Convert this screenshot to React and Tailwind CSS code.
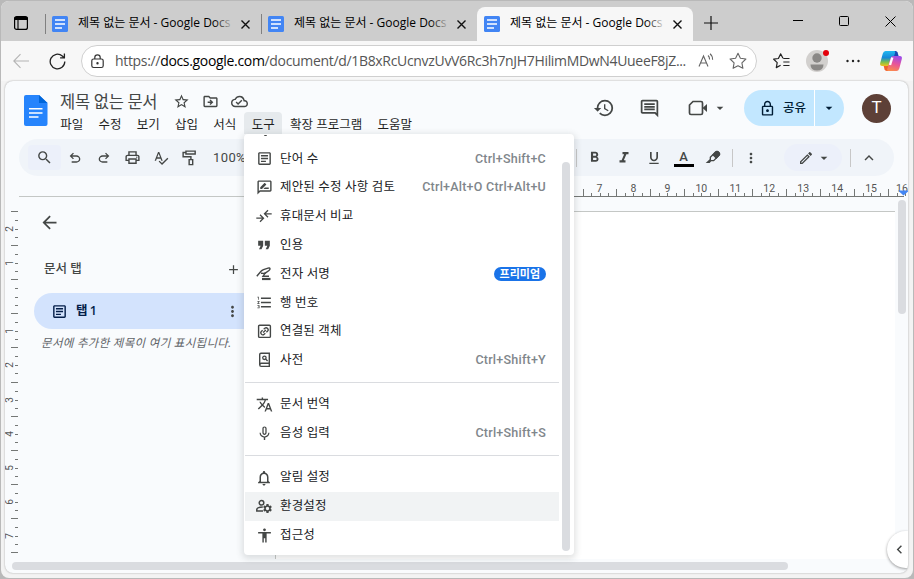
import {
  MdAccessibility,
  MdAdd,
  MdArrowBack,
  MdArrowDropDown,
  MdFormatBold,
  MdFormatItalic,
  MdFormatListNumbered,
  MdFormatQuote,
  MdFormatUnderlined,
  MdHistory,
  MdKeyboardArrowLeft,
  MdKeyboardArrowUp,
  MdMicNone,
  MdMoreVert,
  MdNotificationsNone,
  MdOutlineArticle,
  MdOutlineCloudDone,
  MdOutlineComment,
  MdOutlineDriveFileMove,
  MdOutlineEdit,
  MdOutlineLock,
  MdOutlinePrint,
  MdOutlineRateReview,
  MdSearch,
  MdSettings,
  MdSpellcheck,
  MdStarOutline,
  MdTranslate,
} from "react-icons/md";

const DocsFavicon = () => (
  <svg className="w-4 h-4 shrink-0" viewBox="0 0 16 16">
    <rect width="16" height="16" rx="1.5" fill="#4285f4" />
    <path d="M3 4h10M3 8h10M3 12h7" stroke="#fff" strokeWidth="1.7" />
  </svg>
);

const UndoIcon = ({ className }) => (
  <svg className={className} viewBox="0 -960 960 960" fill="currentColor">
    <path d="M280-200v-80h284q63 0 109.5-40T720-420q0-60-46.5-100T564-560H312l104 104-56 56-200-200 200-200 56 56-104 104h252q97 0 166.5 63T800-420q0 94-69.5 157T564-200H280Z" />
  </svg>
);

const PaintRollerIcon = () => (
  <svg className="w-[17px] h-[17px]" viewBox="0 0 24 24" fill="none" stroke="currentColor" strokeWidth="2">
    <path d="M7 3h13v4H7zM7 5H3v6h11v4M11.5 15h5v7h-5z" />
  </svg>
);

const HighlighterIcon = () => (
  <svg className="w-[16px] h-[16px]" viewBox="0 0 24 24" fill="none" stroke="currentColor" strokeWidth="2">
    <path d="M8 11l8-8q2-1.500 4 0l1 1q1.500 2 0 4l-8 8H9l-1-1z" />
    <path d="M12 7l5 5 4-4q2-2 0-4l-1-1q-2-2-4 0z" fill="currentColor" />
    <path d="M7 14l-6 5.500h6l2.500-3z" fill="currentColor" stroke="none" />
  </svg>
);

const CompareIcon = () => (
  <svg className="w-4 h-4" viewBox="0 0 16 16" fill="none" stroke="currentColor" strokeWidth="1.3">
    <path d="M.3 10.200h7M4 6.700l3.500 3.500L4 13.700M15.700 5.800H8.700M12 2.300L8.500 5.800 12 9.300" />
  </svg>
);

const SignatureIcon = () => (
  <svg className="w-4 h-4" viewBox="0 0 16 16" fill="none" stroke="currentColor" strokeWidth="1.4">
    <path d="M.8 10.200L5 5.300q1-1 2.500-1.600L12 2.100q1.800-.5 2 .6.2 1-1 1.800L9.600 6.900q-.8.6-2.200.5L5 7.200" />
    <path d="M9.500 6.700L7 10.200h6" />
    <path d="M6 13h8.500" strokeWidth="2.200" />
  </svg>
);

const LinkedObjectIcon = () => (
  <svg className="w-[15px] h-[15px]" viewBox="0 0 15 15" fill="none" stroke="currentColor" strokeWidth="1.4">
    <rect x="1.6" y="1.2" width="11.8" height="12.2" rx="1" />
    <g transform="rotate(-42 7.5 7.3)" strokeWidth="1.3">
      <path d="M6.800 5.300H5.300a2 2 0 0 0 0 4h1.500M8.200 5.300h1.500a2 2 0 0 1 0 4H8.200M5.600 7.300h3.800" />
    </g>
  </svg>
);

const DictionaryIcon = () => (
  <svg className="w-[15px] h-4" viewBox="0 0 15 16" fill="none" stroke="currentColor" strokeWidth="1.4">
    <path d="M12.300 11.500V1.300H4Q2.700 1.300 2.700 2.600v10.200q0 1.600 1.500 1.600h8.800M2.900 12.700q.2-1.400 1.500-1.400h8.400M12.300 11.300v3" />
    <circle cx="7.400" cy="5.800" r="1.700" strokeWidth="1.3" />
    <path d="M8.600 7l2 2" strokeWidth="1.3" />
  </svg>
);

const ManageAccountsIcon = () => (
  <div className="relative w-[18px] h-[18px]">
    <svg className="w-[18px] h-[18px]" viewBox="0 0 18 18" fill="none" stroke="currentColor" strokeWidth="1.5">
      <circle cx="6.500" cy="5.800" r="2.300" />
      <path d="M8 14H1.800v-1.500q0-2.300 6-2.500" />
    </svg>
    <MdSettings className="absolute left-[7px] top-[6px] w-[11px] h-[11px]" />
  </div>
);

const tabs = [
  { title: "제목 없는 문서 - Google Docs", active: false },
  { title: "제목 없는 문서 - Google Docs", active: false },
  { title: "제목 없는 문서 - Google Docs", active: true },
];

const BrowserTab = ({ title, active }) => (
  <div
    className={
      active
        ? "relative flex items-center w-[216px] h-[34px] mt-[6px] pl-[7px] pr-[10px] rounded-t-lg bg-[#f7f7f7]"
        : "relative flex items-center w-[216px] h-[34px] mt-[6px] pl-[7px] pr-[10px]"
    }
  >
    {!active && <div className="absolute left-0 top-[7px] w-px h-5 bg-[#808080]" />}
    <DocsFavicon />
    <div className="relative -mt-[2px] ml-[10px] w-[156px] h-5 overflow-hidden whitespace-nowrap text-[12px] leading-5 text-black">
      {title}
      <div
        className={
          active
            ? "absolute right-0 top-0 w-5 h-5 bg-linear-to-r from-transparent to-[#f7f7f7]"
            : "absolute right-0 top-0 w-5 h-5 bg-linear-to-r from-transparent to-[#cdcdcd]"
        }
      />
    </div>
    <svg className="ml-[6px] w-[11px] h-[11px] shrink-0" viewBox="0 0 11 11" stroke="#111" strokeWidth="1.4">
      <path d="M1.5 1.5l8 8M9.5 1.5l-8 8" />
    </svg>
  </div>
);

const TabStrip = () => (
  <div className="flex h-10 bg-[#cdcdcd]">
    <div className="flex items-center w-11 pl-[13px] pt-[4px]">
      <svg className="w-[14px] h-[14px]" viewBox="0 0 14 14" fill="none" stroke="#000">
        <rect x=".6" y=".6" width="12.8" height="12.8" rx="2" strokeWidth="1.2" />
        <path d="M.5 2.4h13" strokeWidth="3" />
        <path d="M4 3v10.5" strokeWidth="1.1" />
      </svg>
    </div>
    {tabs.map((tab, i) => (
      <BrowserTab key={i} {...tab} />
    ))}
    <div className="flex items-center pt-[3px] pl-[11px]">
      <svg className="w-[14px] h-[14px]" viewBox="0 0 14 14" stroke="#111" strokeWidth="1.2">
        <path d="M7 0v14M0 7h14" />
      </svg>
    </div>
    <div className="flex ml-auto h-10">
      <div className="flex w-[46px] items-center justify-center">
        <svg className="w-[10px] h-[10px]" viewBox="0 0 10 10" stroke="#000">
          <path d="M0 4.5h10" />
        </svg>
      </div>
      <div className="flex w-[46px] items-center justify-center">
        <svg className="w-[10px] h-[10px]" viewBox="0 0 10 10" stroke="#000" fill="none">
          <rect x=".5" y=".5" width="9" height="9" rx="1" />
        </svg>
      </div>
      <div className="flex w-[46px] items-center justify-center">
        <svg className="w-[11px] h-[11px]" viewBox="0 0 11 11" stroke="#000">
          <path d="M.5.5l10 10M10.5.5l-10 10" />
        </svg>
      </div>
    </div>
  </div>
);

const CopilotLogo = () => (
  <svg className="w-6 h-6" viewBox="0 0 24 24">
    <defs>
      <linearGradient id="cpa" x1="0" y1="0" x2="0" y2="1">
        <stop offset="0" stopColor="#22b8f0" />
        <stop offset=".45" stopColor="#1689d8" />
        <stop offset=".75" stopColor="#7fc04c" />
        <stop offset="1" stopColor="#f2c21a" />
      </linearGradient>
      <linearGradient id="cpb" x1=".6" y1="0" x2=".3" y2="1">
        <stop offset="0" stopColor="#a04be8" />
        <stop offset=".5" stopColor="#e8559a" />
        <stop offset="1" stopColor="#fb8a4d" />
      </linearGradient>
    </defs>
    <path d="M13 2h3.600q1.500 0 2 1.600L19.600 7H15z" fill="#1946b5" />
    <path d="M6.500 2h8.600q1.500 0 1.100 1.600L12.600 15q-.7 2-2.600 2H3.200q-2.700 0-2-3L3.800 4.600Q4.500 2 6.500 2z" fill="url(#cpa)" />
    <path d="M11 22H7.800q-1.800 0-2.300-1.800L4.700 17H10z" fill="#f0622e" />
    <path d="M17.500 22H9.200q-1.500 0-1-1.700L11.500 9q.6-2 2.600-2h6.700q2.700 0 2 3l-2.500 9.400Q19.500 22 17.500 22z" fill="url(#cpb)" />
    <path d="M13.300 8.500l-2.300 7.500" stroke="#fff" strokeWidth="2.400" />
  </svg>
);

const AddressBar = () => (
  <div className="flex items-center h-10 bg-[#f7f7f7]">
    <svg className="ml-3 w-4 h-4 shrink-0" viewBox="0 0 16 16" fill="none" stroke="#b4b4b4" strokeWidth="1.1">
      <path d="M16 8H.8M7.500 1.200L.8 8l6.700 6.800" />
    </svg>
    <svg className="ml-5 w-[17px] h-[17px] shrink-0" viewBox="0 0 17 17" fill="none" stroke="#222" strokeWidth="1.3">
      <path d="M15.800 8.500a7.300 7.300 0 1 1-2.500-5.500l1.900 1.700M15.400.6v4.300h-4.300" />
    </svg>
    <div className="flex items-center ml-[15px] w-[676px] h-8 shrink-0 rounded-full border border-[#cfcfcf] bg-white">
      <svg className="ml-[9px] w-[13px] h-[15px]" viewBox="0 0 13 15" fill="none" stroke="#333" strokeWidth="1.2">
        <rect x=".8" y="5" width="11.400" height="8.500" rx="1.800" />
        <path d="M3.800 5V3.500a2.700 2.700 0 0 1 5.400 0V5" />
        <circle cx="6.500" cy="9.300" r=".6" fill="#333" />
      </svg>
      <div className="-mt-px ml-[11px] w-[576px] shrink-0 whitespace-nowrap text-[14px] text-[#555] tracking-[-0.325px]">
        https://<span className="text-black">docs.google.com</span>/document/d/1B8xRcUcnvzUvV6Rc3h7nJH7HilimMDwN4UueeF8jZ...
      </div>
      <svg className="ml-[7px] w-4 h-4 shrink-0" viewBox="0 0 16 16" fill="none" stroke="#666" strokeWidth="1.100">
        <path d="M1 13.500L5.500 3l4.500 10.500M2.500 10h6M10 2.500q1.600 1.300 1.600 4M12 .8q2.600 2 2.600 6" />
      </svg>
      <svg className="ml-[15px] w-[18px] h-[18px] shrink-0" viewBox="0 0 18 18" fill="none" stroke="#666" strokeWidth="1.100" strokeLinejoin="round">
        <path d="M9 1.200l2.400 5 5.500.8-4 3.800 1 5.500L9 13.700l-4.900 2.600 1-5.500-4-3.800 5.500-.8z" />
      </svg>
    </div>
    <svg className="ml-4 w-[17px] h-4" viewBox="0 0 17 16" fill="none" stroke="#222" strokeWidth="1.2" strokeLinejoin="round">
      <path d="M10 5.300L7.600.9l-2.200 4.600-4.700.7 3.500 3.400-.9 5 4.300-2.300M10.300 5.500h6.200M10.300 9h6.200M10.300 12.500h6.200" />
    </svg>
    <div className="relative ml-[16px] w-[22px] h-[22px]">
      <svg className="w-[22px] h-[22px]" viewBox="0 0 22 22">
        <circle cx="11" cy="11" r="11" fill="#d2d0ce" />
        <circle cx="11" cy="8" r="4.700" fill="#8a8886" />
        <path d="M4.500 14.500h13q0 6-6.500 6t-6.500-6z" fill="#8a8886" />
      </svg>
      <div className="absolute top-0 right-[-1px] w-[6px] h-[6px] rounded-full bg-[#e3000b]" />
    </div>
    <svg className="ml-[18px] w-[14px] h-1" viewBox="0 0 14 4" fill="#222">
      <circle cx="1.500" cy="2" r="1.200" />
      <circle cx="7" cy="2" r="1.200" />
      <circle cx="12.500" cy="2" r="1.200" />
    </svg>
    <div className="ml-[19px]">
      <CopilotLogo />
    </div>
  </div>
);

const menuNames = ["파일", "수정", "보기", "삽입", "서식", "도구", "확장 프로그램", "도움말"];

const DocsHeader = () => (
  <div className="flex h-[58px] text-[#444746]">
    <svg className="ml-[19px] mt-[14px] w-6 h-8" viewBox="0 0 24 32">
      <path d="M2 0h13l8.500 8v21q0 2-2 2H2q-2 0-2-2V2q0-2 2-2z" fill="#2684fc" />
      <path d="M15 0l8.500 8H15z" fill="#0066da" />
      <path d="M5 13.800h13.500M5 17.900h13.500M5 22h9.500" stroke="#fff" strokeWidth="1.500" />
    </svg>
    <div className="w-[400px] ml-[5px]">
      <div className="flex items-center h-[31px] pl-[7px] pt-[10px]">
        <div className="w-[97px] whitespace-nowrap text-[16.500px] leading-6 tracking-[-0.300px]">제목 없는 문서</div>
        <MdStarOutline className="ml-[16px] w-[17px] h-[17px]" />
        <MdOutlineDriveFileMove className="ml-[12px] w-[17px] h-[17px]" />
        <MdOutlineCloudDone className="ml-[12px] w-[17px] h-[17px]" />
      </div>
      <div className="flex -ml-[0.500px] text-[12.500px] text-[#1f1f1f]">
        {menuNames.map((name) => (
          <div
            key={name}
            className={
              name === "도구"
                ? "h-[22px] leading-[25px] px-[7.650px] whitespace-nowrap rounded-t bg-[#e6eaed]"
                : "h-[22px] leading-[25px] px-[7.650px] whitespace-nowrap"
            }
          >
            {name}
          </div>
        ))}
      </div>
    </div>
    <div className="flex items-center ml-auto h-[54px]">
      <MdHistory className="w-[22px] h-[22px]" />
      <MdOutlineComment className="ml-[24px] w-[21px] h-[21px]" />
      <svg className="ml-[28px] w-[20px] h-[16px]" viewBox="0 0 20 16" fill="none" stroke="currentColor" strokeWidth="1.700">
        <path d="M5 1.500h8q1.500 0 1.500 1.500v10q0 1.500-1.500 1.500H3q-1.500 0-1.500-1.500V5z" />
        <path d="M14.500 8l4.500-4v8z" fill="currentColor" stroke="none" />
      </svg>
      <MdArrowDropDown className="ml-[4px] w-4 h-4" />
      <div className="flex items-center ml-[16px] w-[100px] h-9 rounded-full bg-[#c2e7ff] text-[#001d35]">
        <div className="flex items-center w-[71px] h-9 pl-[15px] border-r border-white">
          <MdOutlineLock className="w-[17px] h-[17px]" />
          <span className="ml-[7px] text-[12.500px] font-medium">공유</span>
        </div>
        <MdArrowDropDown className="ml-[6px] w-4 h-4" />
      </div>
      <div className="flex items-center justify-center ml-[18px] mr-[17px] w-[29px] h-[29px] rounded-full bg-[#5d4037] font-[Roboto] text-[17px] text-white">
        T
      </div>
    </div>
  </div>
);

const ToolCell = ({ children }) => (
  <div className="flex items-center justify-center w-[28.600px] h-8 shrink-0">{children}</div>
);

const FormatCell = ({ children }) => (
  <div className="flex items-center justify-center w-[29.600px] h-8 shrink-0">{children}</div>
);

const DocsToolbar = () => (
  <div className="flex items-center ml-[14px] w-[875px] h-[37px] rounded-full bg-[#f0f4f9] text-[#444746]">
    <div className="flex items-center justify-center ml-[9px] w-[33px] h-[25px] rounded bg-[#ecf0fa]">
      <MdSearch className="w-[17px] h-[17px]" />
    </div>
    <ToolCell>
      <UndoIcon className="w-4 h-4 mt-px" />
    </ToolCell>
    <ToolCell>
      <UndoIcon className="w-4 h-4 mt-px -scale-x-100" />
    </ToolCell>
    <ToolCell>
      <MdOutlinePrint className="w-[17px] h-[17px]" />
    </ToolCell>
    <ToolCell>
      <MdSpellcheck className="w-4 h-4" />
    </ToolCell>
    <ToolCell>
      <PaintRollerIcon />
    </ToolCell>
    <span className="ml-[9px] w-[40px] font-[Roboto] text-[13px] tracking-[0.400px]">100%</span>
    <div className="flex items-center ml-auto">
      <div className="mr-[3px] w-px h-[18px] bg-[#c7c7c7]" />
      <FormatCell>
        <MdFormatBold className="w-[17px] h-[17px]" />
      </FormatCell>
      <FormatCell>
        <MdFormatItalic className="w-[18px] h-[18px]" />
      </FormatCell>
      <FormatCell>
        <MdFormatUnderlined className="w-[16px] h-[16px]" />
      </FormatCell>
      <FormatCell>
        <div className="flex flex-col items-center pt-[3px]">
          <span className="font-[Roboto] font-medium text-[13px] leading-[12px]">A</span>
          <div className="mt-[1px] w-5 h-[3px] bg-black" />
        </div>
      </FormatCell>
      <FormatCell>
        <HighlighterIcon />
      </FormatCell>
      <div className="ml-[4px] w-px h-[18px] bg-[#c7c7c7]" />
      <MdMoreVert className="ml-[10px] w-[16px] h-[16px]" />
      <div className="flex items-center ml-[25px] pl-[14px] w-[58px] h-[27px] rounded-full bg-[#ecf0fa]">
        <MdOutlineEdit className="w-4 h-4" />
        <MdArrowDropDown className="ml-[2px] w-4 h-4" />
      </div>
      <div className="ml-[8px] w-px h-[18px] bg-[#c7c7c7]" />
      <MdKeyboardArrowUp className="ml-[9px] mr-[16px] w-[18px] h-[18px]" />
    </div>
  </div>
);

const hNumbers = [7, 8, 9, 10, 11, 12, 13, 14, 15, 16];

const HorizontalRuler = () => (
  <svg className="w-[903px] h-[17px]" viewBox="5 180 903 17">
    <path d="M19 196.500h226" stroke="#c4c7c5" />
    <path d="M560 196.500h344" stroke="#747775" />
    {hNumbers.map((n, i) => {
      const x = 599.5 + i * 33.95;
      return (
        <g key={n}>
          <text x={n === 16 ? 902 : x} y="191.500" textAnchor="middle" fontSize="10.500" fill="#555" fontFamily="Roboto">
            {n}
          </text>
          <path
            d={`M${Math.round(x - 8.5)}.5 193v3M${Math.round(x)}.5 193v3M${Math.round(x + 8.5)}.5 193v3M${Math.round(x - 17)}.5 189v7`}
            stroke="#747775"
          />
        </g>
      );
    })}
    <path d="M898 190.500h11l-5.500 5z" fill="#4285f4" />
  </svg>
);

const vNumbers = ["2", "1", "", "1", "2", "3", "4", "5", "6", "7"];

const VerticalRuler = () => (
  <svg className="w-[14px] h-[362px]" viewBox="5 197 14 362">
    {vNumbers.map((n, i) => {
      const y = Math.round(229 + i * 34.1);
      return (
        <g key={i}>
          {n && (
            <text
              x="13"
              y={y}
              transform={`rotate(-90 13 ${y})`}
              textAnchor="middle"
              fontSize="10"
              fill="#555"
              fontFamily="Roboto"
            >
              {n}
            </text>
          )}
          <path
            d={`M15 ${y - 8.5}h3M15 ${y + 0.5}h3M15 ${y + 8.5}h3M11 ${y - 17.5}h7`}
            stroke="#747775"
          />
        </g>
      );
    })}
    <path d="M11 552.500h7" stroke="#747775" />
  </svg>
);

const Outline = () => (
  <div className="w-[256px] text-[#444746]">
    <MdArrowBack className="ml-[20px] mt-[15px] w-[21px] h-[21px]" />
    <div className="flex items-center mt-[26px] ml-[25px] h-5">
      <span className="w-[180px] text-[12.500px] font-medium">문서 탭</span>
      <MdAdd className="ml-[2px] w-[15px] h-[15px]" />
    </div>
    <div className="flex items-center mt-[14px] ml-[15px] h-9 w-[225px] rounded-l-full bg-[#d3e3fd] text-[#041e49]">
      <MdOutlineArticle className="ml-[17px] w-[17px] h-[17px]" />
      <span className="ml-[8px] w-[120px] text-[12.500px] font-semibold tracking-[-0.500px]">탭 1</span>
      <MdMoreVert className="ml-[28px] w-[17px] h-[17px] text-[#444746]" />
    </div>
    <p className="mt-[5px] ml-[22px] text-[11.500px] leading-[17px] italic whitespace-nowrap tracking-[0.300px] text-[#5f6368]">
      문서에 추가한 제목이 여기 표시됩니다.
    </p>
  </div>
);

const toolMenu = [
  [
    { icon: <MdOutlineArticle className="w-[17px] h-[17px]" />, label: "단어 수", keys: "Ctrl+Shift+C" },
    {
      icon: <MdOutlineRateReview className="w-[17px] h-[17px]" />,
      label: "제안된 수정 사항 검토",
      keys: "Ctrl+Alt+O Ctrl+Alt+U",
    },
    { icon: <CompareIcon />, label: "휴대문서 비교" },
    { icon: <MdFormatQuote className="w-[20px] h-[20px] shrink-0" />, label: "인용" },
    { icon: <SignatureIcon />, label: "전자 서명", badge: "프리미엄" },
    { icon: <MdFormatListNumbered className="w-[17px] h-[17px]" />, label: "행 번호" },
    { icon: <LinkedObjectIcon />, label: "연결된 객체" },
    { icon: <DictionaryIcon />, label: "사전", keys: "Ctrl+Shift+Y" },
  ],
  [
    { icon: <MdTranslate className="w-[17px] h-[17px]" />, label: "문서 번역" },
    { icon: <MdMicNone className="w-[17px] h-[17px]" />, label: "음성 입력", keys: "Ctrl+Shift+S" },
  ],
  [
    { icon: <MdNotificationsNone className="w-[18px] h-[18px]" />, label: "알림 설정" },
    { icon: <ManageAccountsIcon />, label: "환경설정", selected: true },
    { icon: <MdAccessibility className="w-[17px] h-[17px]" />, label: "접근성" },
  ],
];

const MenuRow = ({ icon, label, keys, badge, selected }) => (
  <div
    className={
      selected
        ? "flex items-center h-[28.800px] pl-[10px] pr-[13px] bg-[#f1f3f4]"
        : "flex items-center h-[28.800px] pl-[10px] pr-[13px]"
    }
  >
    <div className="flex justify-center w-[18px] text-[#444746]">{icon}</div>
    <span className="ml-[7px] text-[12.500px] tracking-[0.150px] text-[#202124]">{label}</span>
    {keys && (
      <span className="ml-auto font-[Roboto] font-medium text-[12.500px] tracking-[0.240px] text-[#80868b]">{keys}</span>
    )}
    {badge && (
      <span className="ml-auto px-[6px] h-[14px] leading-[14px] rounded-full bg-[#1a73e8] text-[11px] font-bold text-white">
        {badge}
      </span>
    )}
  </div>
);

const ToolsMenu = () => (
  <div className="absolute left-[239px] top-[53px] flex w-[330px] h-[421px] rounded bg-white shadow-[0_2px_6px_2px_rgba(60,64,67,0.15)]">
    <div className="absolute left-[20px] top-[1px] w-[3px] h-px rounded-b bg-[#444746]" />
    <div className="w-[314px] ml-px pt-[10.500px]">
      {toolMenu.map((group, i) => (
        <div key={i} className={i > 0 ? "mt-[7.500px] pt-[6.900px] border-t border-[#dadce0]" : ""}>
          {group.map((item) => (
            <MenuRow key={item.label} {...item} />
          ))}
        </div>
      ))}
    </div>
    <div className="ml-[3px] mt-7 w-2 h-[389px] rounded-full bg-[#dadce0]" />
  </div>
);

const DocsApp = () => (
  <div className="relative mx-1 w-[903px] h-[492px] overflow-hidden rounded-lg bg-[#f9fbfd] shadow-[0_0_2px_rgba(0,0,0,0.35)]">
    <DocsHeader />
    <DocsToolbar />
    <div className="h-[4px]" />
    <HorizontalRuler />
    <div className="flex h-[362px]">
      <VerticalRuler />
      <Outline />
      <div className="mt-[14px] w-[620px] h-[348px] bg-white border-t border-l border-[#c4c7c5]" />
      <div className="ml-[3px] mt-[3px] w-2 h-[114px] rounded-full bg-[#dadce0]" />
    </div>
    <div className="ml-[7px] mt-[3px] w-[776px] h-2 rounded-full bg-[#dadce0]" />
    <ToolsMenu />
    <div className="absolute right-0 top-[450px] flex items-center w-[21px] h-[37px] pl-[4px] rounded-l-full bg-white shadow-[0_1px_3px_rgba(0,0,0,0.4)]">
      <MdKeyboardArrowLeft className="w-[17px] h-[17px] text-[#444746]" />
    </div>
  </div>
);

const App = () => {
  return (
    <div className="w-[914px] h-[579px] bg-[#b9b9b9] overflow-hidden p-px font-['Open_Sans','Noto_Sans_CJK_KR',sans-serif]">
      <div className="w-[912px] h-[577px] overflow-hidden rounded-lg bg-[#f3f3f3]">
        <TabStrip />
        <AddressBar />
        <DocsApp />
      </div>
    </div>
  );
};

export default App;
